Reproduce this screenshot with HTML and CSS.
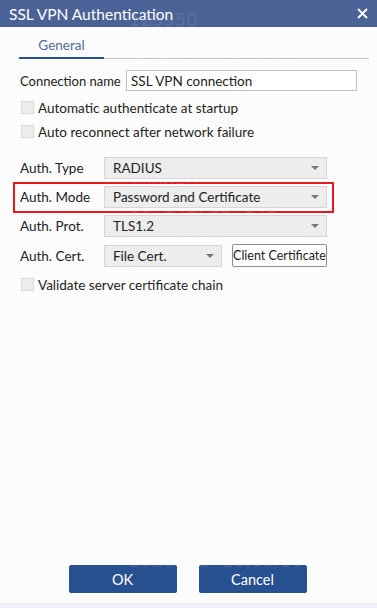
FILE: index.html
```html
<!DOCTYPE html>
<html lang="en">
<head>
    <meta charset="UTF-8">
    <meta name="viewport" content="width=device-width, initial-scale=1.0">
    <title>SSL VPN Authentication</title>
    <link rel="stylesheet" href="styles.css">
</head>
<body>
    <div class="dialog">
        <div class="titlebar">
            <span class="title">SSL VPN Authentication</span>
            <svg class="close" width="11" height="11" viewBox="0 0 11 11">
                <path d="M1 1 L10 10 M10 1 L1 10" stroke="#fff" stroke-width="1.8"/>
            </svg>
        </div>

        <div class="content">
            <div class="tabs">
                <div class="tab active">General</div>
            </div>

            <div class="form">
                <div class="row name-row">
                    <label class="label">Connection name</label>
                    <input class="text-input" type="text" value="SSL VPN connection">
                </div>
                <label class="check"><span class="box"></span>Automatic authenticate at startup</label>
                <label class="check"><span class="box"></span>Auto reconnect after network failure</label>

                <div class="selects">
                    <div class="row">
                        <span class="label short">Auth. Type</span>
                        <div class="select">RADIUS<span class="arrow"></span></div>
                    </div>
                    <div class="row marked">
                        <span class="label short">Auth. Mode</span>
                        <div class="select">Password and Certificate<span class="arrow"></span></div>
                    </div>
                    <div class="row">
                        <span class="label short">Auth. Prot.</span>
                        <div class="select">TLS1.2<span class="arrow"></span></div>
                    </div>
                    <div class="row">
                        <span class="label short">Auth. Cert.</span>
                        <div class="select small">File Cert.<span class="arrow"></span></div>
                        <button class="cert-btn">Client Certificate</button>
                    </div>
                </div>

                <label class="check"><span class="box"></span>Validate server certificate chain</label>
            </div>

            <div class="actions">
                <button class="button">OK</button>
                <button class="button">Cancel</button>
            </div>
        </div>

        <!-- watermark laid over the whole window -->
        <div class="watermark">
            <div>129950</div><div>10. 142. 32. 143</div><div>2026-3-2&nbsp; 20:53:16</div><div>&nbsp;</div>
            <div>129950</div><div>10. 142. 32. 143</div><div>2026-3-2&nbsp; 20:53:16</div><div>&nbsp;</div>
            <div>129950</div><div>10. 142. 32. 143</div><div>2026-3-2&nbsp; 20:53:16</div><div>&nbsp;</div>
            <div>129950</div><div>10. 142. 32. 143</div><div>2026-3-2&nbsp; 20:53:16</div><div>&nbsp;</div>
            <div>129950</div><div>10. 142. 32. 143</div><div>2026-3-2&nbsp; 20:53:16</div><div>&nbsp;</div>
            <div>129950</div><div>10. 142. 32. 143</div><div>2026-3-2&nbsp; 20:53:16</div><div>&nbsp;</div>
            <div>129950</div><div>10. 142. 32. 143</div><div>2026-3-2&nbsp; 20:53:16</div><div>&nbsp;</div>
        </div>
    </div>
    <div class="bottom-strip"></div>
</body>
</html>
```

FILE: styles.css
```css
body {
    margin: 0;
    padding: 0;
    font-family: 'Lato', sans-serif;
    font-size: 13.5px;
    color: #222;
    background-color: #eef1f8;
    overflow: hidden;
}
.dialog {
    position: relative;
    height: 603px;
    background-color: #fcfcfc;
    display: flex;
    flex-direction: column;
    overflow: hidden;
}
.titlebar {
    height: 27px;
    background-color: #4b6296;
    color: #fff;
    display: flex;
    align-items: center;
    justify-content: space-between;
    padding: 0 9px;
    flex-shrink: 0;
}
.title {
    font-size: 15.5px;
}
.tabs {
    margin: 7px 8px 0 19px;
    border-bottom: 1px solid #c4c4c4;
    display: flex;
}
.tab {
    width: 85px;
    text-align: center;
    color: #4d6a9e;
    height: 23px;
    line-height: 22px;
}
.tab.active {
    border-bottom: 2px solid #26508f;
    margin-bottom: -1px;
}
.content {
    flex: 1;
    display: flex;
    flex-direction: column;
}
.form {
    padding: 11px 0 0 20px;
    display: flex;
    flex-direction: column;
    align-items: flex-start;
}
.row {
    display: flex;
    align-items: center;
    white-space: nowrap;
}
.label {
    width: 106px;
}
.name-row .label {
    font-size: 13px;
}
.label.short {
    width: 84px;
}
.text-input {
    width: 231px;
    height: 21px;
    box-sizing: border-box;
    border: 1px solid #c3bfd2;
    background-color: #fff;
    font-family: 'Lato', sans-serif;
    font-size: 13.5px;
    color: #222;
    padding: 0 4px;
    margin: 0;
}
.check {
    display: flex;
    align-items: center;
    height: 13px;
    margin-top: 10px;
    white-space: nowrap;
}
.check + .check {
    margin-top: 11px;
}
.box {
    width: 11px;
    height: 11px;
    border: 1px solid #dadada;
    background-color: #ececec;
    margin: 0 4px 0 1px;
}
.selects {
    display: flex;
    flex-direction: column;
    align-items: flex-start;
    gap: 7px;
    margin: 19px 0 1px;
}
.select {
    position: relative;
    width: 223px;
    height: 22px;
    box-sizing: border-box;
    border: 1px solid #d6d6d6;
    background-color: #ededed;
    padding-left: 8px;
    line-height: 20px;
}
.select.small {
    width: 118px;
}
.arrow {
    position: absolute;
    right: 7px;
    top: 8px;
    border-left: 4px solid transparent;
    border-right: 4px solid transparent;
    border-top: 4px solid #777;
}
.marked {
    position: relative;
}
.marked::after {
    content: "";
    position: absolute;
    left: -7px;
    right: -7px;
    top: -4px;
    bottom: -5px;
    border: 2px solid #e8191c;
}
.cert-btn {
    margin-left: 10px;
    width: 95px;
    height: 23px;
    border: 1px solid #8c8aa6;
    border-radius: 2px;
    background-color: #fff;
    font-family: 'Lato', sans-serif;
    font-size: 12.5px;
    color: #222;
    padding: 0;
    white-space: nowrap;
    overflow: hidden;
}
.actions {
    margin-top: auto;
    margin-bottom: 10px;
    display: flex;
    justify-content: center;
    gap: 22px;
    padding-right: 2px;
}
.button {
    width: 108px;
    height: 28px;
    background-color: #26508f;
    color: #fff;
    border: none;
    border-radius: 2px;
    font-family: 'Lato', sans-serif;
    font-size: 14.5px;
}
.watermark {
    position: absolute;
    left: 129px;
    top: 10px;
    font-family: 'DejaVu Sans', sans-serif;
    font-size: 18px;
    line-height: 20.8px;
    color: rgba(255, 255, 255, 0.1);
    pointer-events: none;
}
.bottom-strip {
    height: 5px;
}
```
